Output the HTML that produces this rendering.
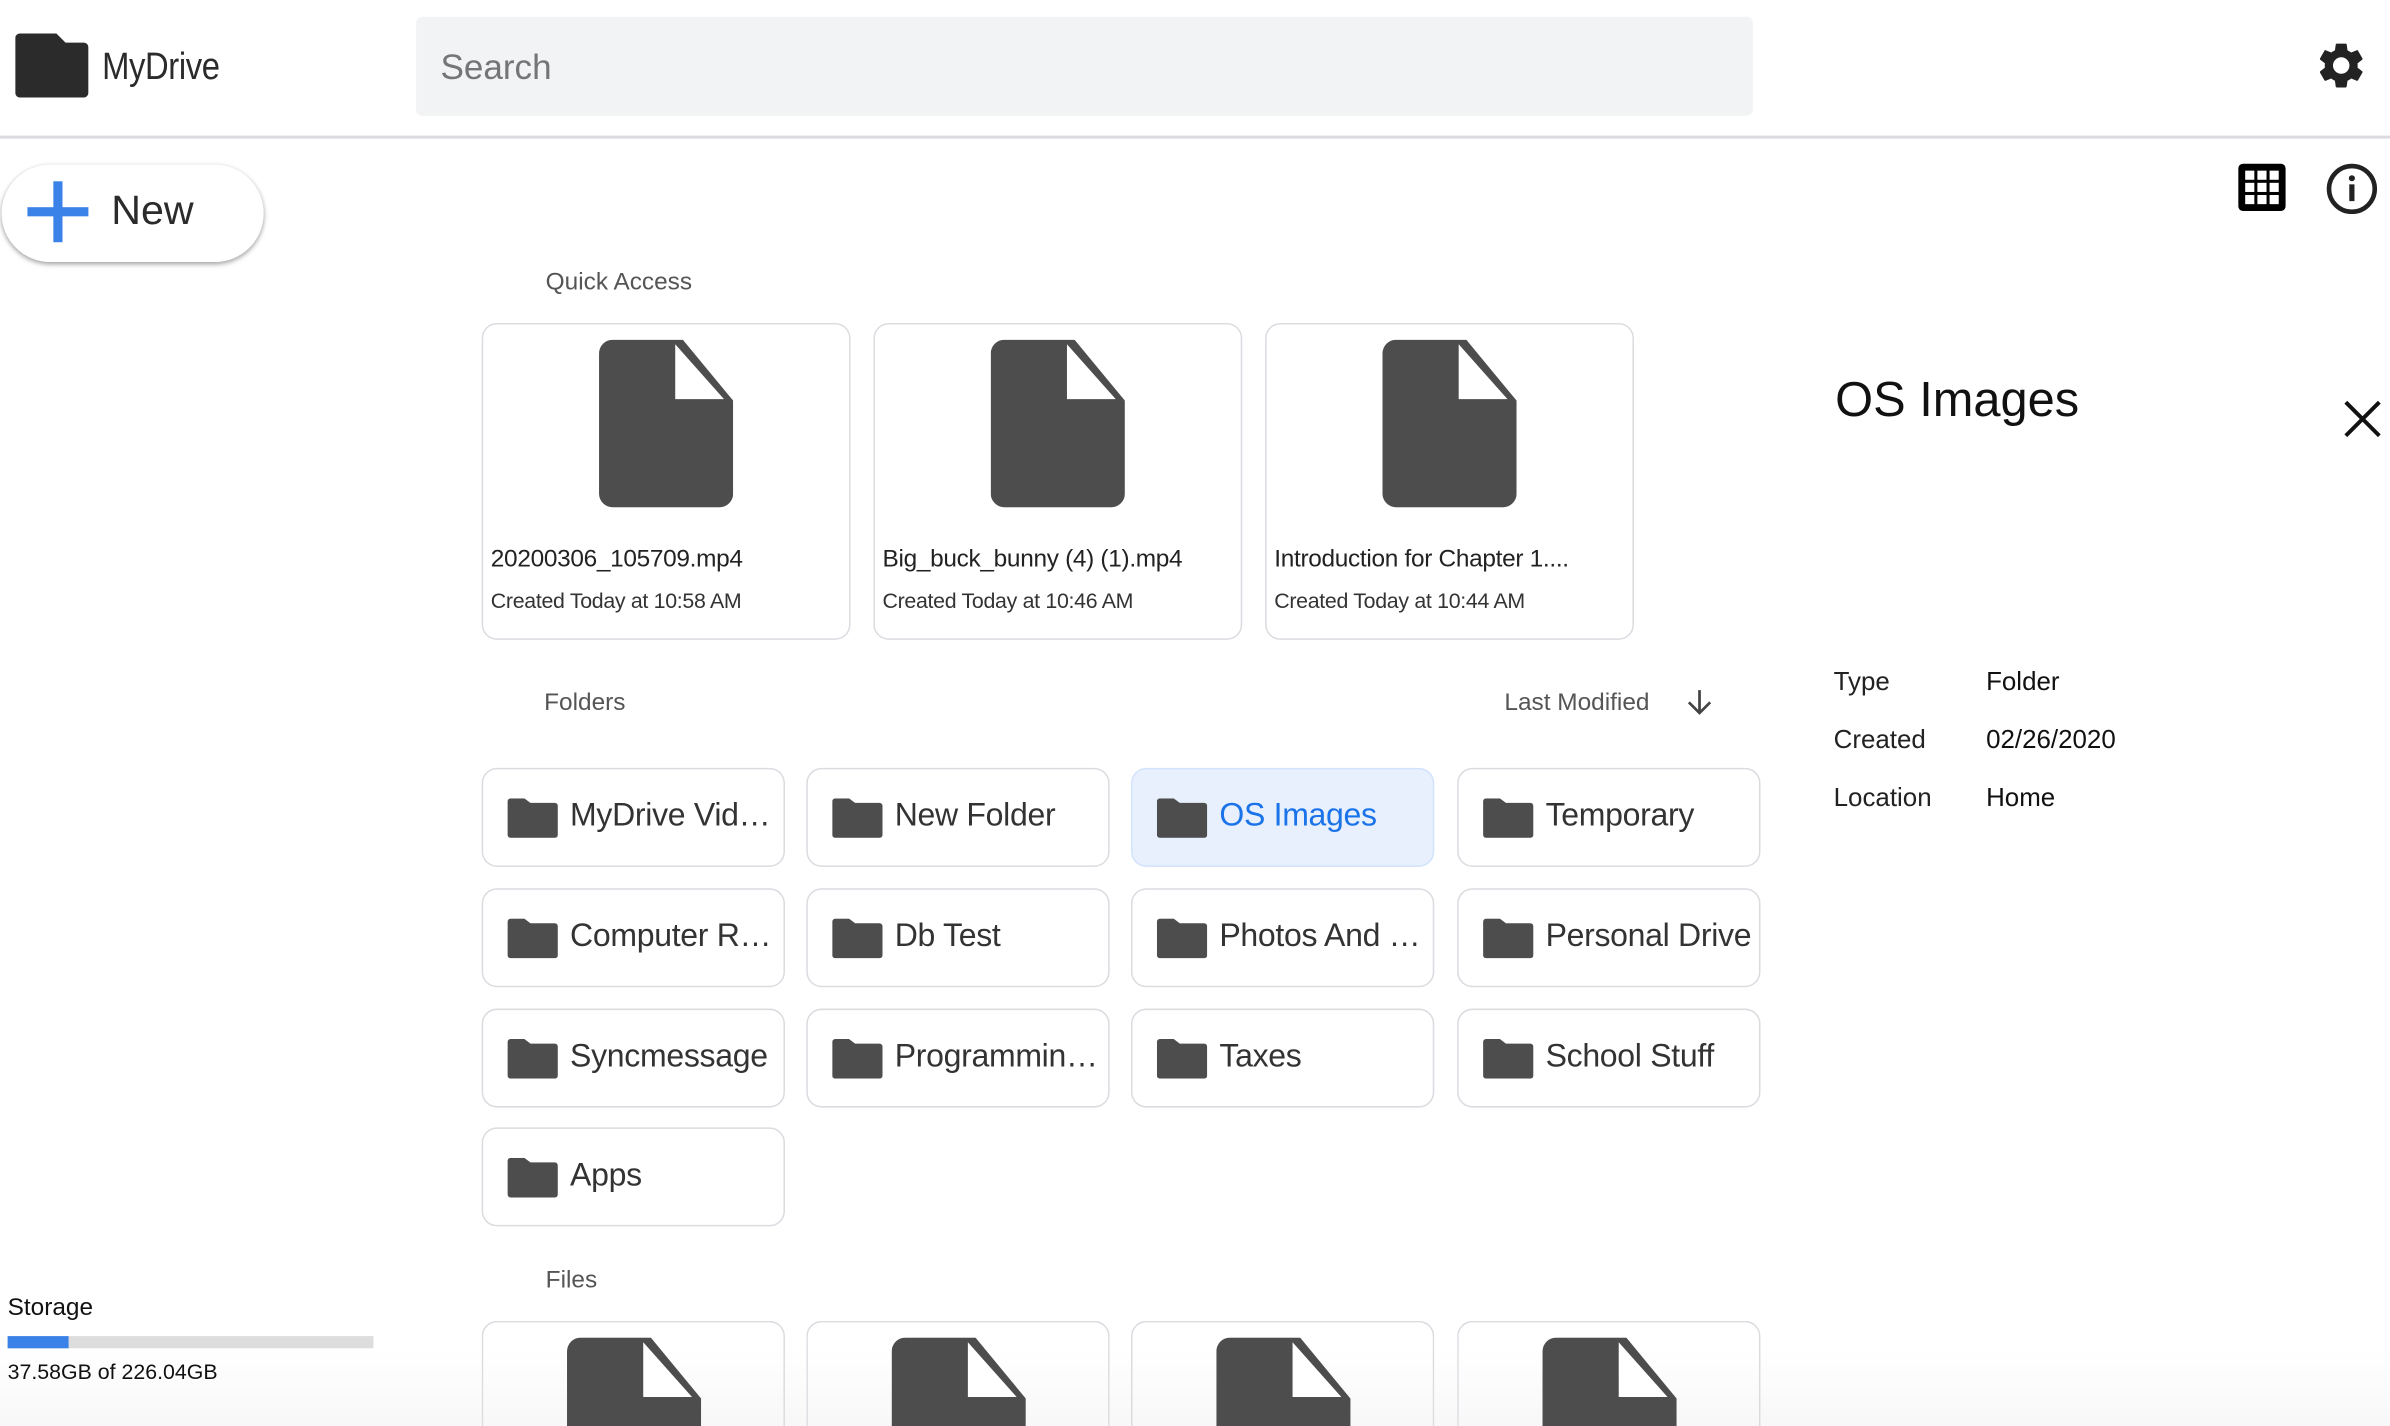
<!DOCTYPE html>
<html><head><meta charset="utf-8">
<style>
html,body{margin:0;padding:0;width:2390px;height:1426px;overflow:hidden;background:#fff}
#s{position:absolute;left:0;top:0;width:1568px;height:936px;overflow:hidden;transform:scale(1.52423,1.52350);transform-origin:0 0;font-family:"Liberation Sans",Arial,sans-serif;color:#222}
.a{position:absolute}
.qc{position:absolute;top:212px;width:242px;height:208px;border:1px solid #dadce0;border-radius:10px;box-sizing:border-box}
.qc svg{position:absolute;left:76px;top:10px}
.qc .n{position:absolute;left:5px;top:146px;font-size:16px;color:#222;white-space:nowrap;letter-spacing:-0.2px}
.qc .d{position:absolute;left:5px;top:173px;font-size:14px;color:#333;white-space:nowrap;letter-spacing:-0.2px}
.fc{position:absolute;width:199px;height:65px;border:1px solid #dadce0;border-radius:10px;box-sizing:border-box;background:#fff}
.fc svg{position:absolute;left:16px;top:19px}
.fc span{position:absolute;left:57px;top:19px;font-size:21px;color:#333;white-space:nowrap;letter-spacing:-0.2px}
.fc.sel{background:#e8f0fe;border-color:#d2e3fc}
.fc.sel span{color:#1a73e8}
.bc{position:absolute;top:867px;width:199px;height:69px;border:1px solid #dadce0;border-bottom:none;border-radius:10px 10px 0 0;box-sizing:border-box;overflow:hidden}
.bc svg{position:absolute;left:55px;top:10px}
.lbl{position:absolute;font-size:16px;color:#555}
</style></head><body><div id="s">
<svg class="a" style="left:10px;top:22px" width="48" height="42" viewBox="0 0 48 42"><path d="M3 0H27L33 6H45A3 3 0 0 1 48 9V39A3 3 0 0 1 45 42H3A3 3 0 0 1 0 39V3A3 3 0 0 1 3 0Z" fill="#2b2b2b"/></svg>
<div class="a" style="left:67px;top:30px;font-size:25px;color:#2b2b2b;transform:scaleX(0.86);transform-origin:0 0;letter-spacing:-0.3px">MyDrive</div>
<div class="a" style="left:273px;top:11px;width:877px;height:65px;background:#f1f3f4;border-radius:4px"></div>
<div class="a" style="left:289px;top:31px;font-size:23px;color:#757575">Search</div>
<svg class="a" style="left:1518px;top:25px" width="36" height="36" viewBox="0 0 24 24"><path fill="#222" d="M19.14 12.94c.04-.3.06-.61.06-.94 0-.32-.02-.64-.07-.94l2.03-1.58a.49.49 0 0 0 .12-.61l-1.920-3.32a.49.49 0 0 0-.59-.22l-2.39.96c-.5-.38-1.03-.7-1.62-.94l-.36-2.54a.48.48 0 0 0-.48-.41h-3.84c-.24 0-.43.17-.47.41l-.36 2.54c-.59.24-1.13.57-1.62.94l-2.390-.96a.48.48 0 0 0-.59.22L2.74 8.87c-.12.21-.08.47.12.61l2.03 1.58c-.05.3-.09.63-.09.94s.02.64.07.94l-2.03 1.58a.49.49 0 0 0-.12.61l1.92 3.32c.12.22.37.29.59.22l2.39-.96c.5.38 1.03.7 1.62.94l.36 2.54c.05.24.24.41.48.41h3.840c.24 0 .44-.17.47-.41l.36-2.54c.59-.24 1.13-.56 1.62-.94l2.39.96c.22.08.47 0 .59-.22l1.92-3.32c.12-.22.07-.47-.12-.61l-2.01-1.58zM12 15.6A3.6 3.6 0 1 1 12 8.4a3.6 3.6 0 0 1 0 7.2z"/></svg>
<div class="a" style="left:0;top:89px;width:1568px;height:2px;background:#dadce0"></div>
<div class="a" style="left:1px;top:108px;width:172px;height:64px;border-radius:32px;background:#fff;box-shadow:0 1px 3px rgba(0,0,0,.3),0 2px 4px rgba(0,0,0,.12)"></div>
<div class="a" style="left:35px;top:119px;width:6px;height:40px;background:#3b82e8"></div>
<div class="a" style="left:18px;top:136px;width:40px;height:6px;background:#3b82e8"></div>
<div class="a" style="left:73px;top:123px;font-size:27px;color:#2b2b2b">New</div>
<svg class="a" style="left:1467px;top:106px" width="34" height="34" viewBox="0 0 34 34"><rect x="1.5" y="1.5" width="31" height="31" rx="3" fill="#000"/><g fill="#fff"><rect x="6" y="6" width="6" height="6"/><rect x="14" y="6" width="6" height="6"/><rect x="22" y="6" width="6" height="6"/><rect x="6" y="14" width="6" height="6"/><rect x="14" y="14" width="6" height="6"/><rect x="22" y="14" width="6" height="6"/><rect x="6" y="22" width="6" height="6"/><rect x="14" y="22" width="6" height="6"/><rect x="22" y="22" width="6" height="6"/></g></svg>
<svg class="a" style="left:1525px;top:106px" width="36" height="36" viewBox="0 0 36 36"><circle cx="18" cy="18" r="15" fill="none" stroke="#222" stroke-width="3"/><rect x="16.3" y="15" width="3.4" height="11" fill="#222"/><circle cx="18" cy="11" r="2" fill="#222"/></svg>
<div class="lbl" style="left:358px;top:177px">Quick Access</div>
<svg width="0" height="0" style="position:absolute"><defs><symbol id="doc" viewBox="0 0 88 110"><path d="M9 0H55L88 40V101A9 9 0 0 1 79 110H9A9 9 0 0 1 0 101V9A9 9 0 0 1 9 0Z" fill="#4d4d4d"/><path d="M50 3V39H82Z" fill="#fff"/></symbol><symbol id="fold" viewBox="0 0 33 26"><path d="M2 0H11L15 3H31A2 2 0 0 1 33 5V24A2 2 0 0 1 31 26H2A2 2 0 0 1 0 24V2A2 2 0 0 1 2 0Z" fill="#4d4d4d"/></symbol></defs></svg>
<div class="qc" style="left:316px"><svg width="88" height="110"><use href="#doc"/></svg><div class="n">20200306_105709.mp4</div><div class="d">Created Today at 10:58 AM</div></div>
<div class="qc" style="left:573px"><svg width="88" height="110"><use href="#doc"/></svg><div class="n">Big_buck_bunny (4) (1).mp4</div><div class="d">Created Today at 10:46 AM</div></div>
<div class="qc" style="left:830px"><svg width="88" height="110"><use href="#doc"/></svg><div class="n">Introduction for Chapter 1....</div><div class="d">Created Today at 10:44 AM</div></div>
<div class="lbl" style="left:357px;top:453px">Folders</div>
<div class="lbl" style="left:987px;top:453px">Last Modified</div>
<svg class="a" style="left:1106px;top:452px" width="18" height="18" viewBox="0 0 18 18"><path d="M9 1V16M2 9L9 16L16 9" fill="none" stroke="#444" stroke-width="1.8"/></svg>
<div class="fc" style="left:316px;top:504px"><svg width="33" height="26"><use href="#fold"/></svg><span>MyDrive Vid…</span></div>
<div class="fc" style="left:529px;top:504px"><svg width="33" height="26"><use href="#fold"/></svg><span>New Folder</span></div>
<div class="fc sel" style="left:742px;top:504px"><svg width="33" height="26"><use href="#fold"/></svg><span>OS Images</span></div>
<div class="fc" style="left:956px;top:504px"><svg width="33" height="26"><use href="#fold"/></svg><span>Temporary</span></div>
<div class="fc" style="left:316px;top:583px"><svg width="33" height="26"><use href="#fold"/></svg><span>Computer R…</span></div>
<div class="fc" style="left:529px;top:583px"><svg width="33" height="26"><use href="#fold"/></svg><span>Db Test</span></div>
<div class="fc" style="left:742px;top:583px"><svg width="33" height="26"><use href="#fold"/></svg><span>Photos And …</span></div>
<div class="fc" style="left:956px;top:583px"><svg width="33" height="26"><use href="#fold"/></svg><span>Personal Drive</span></div>
<div class="fc" style="left:316px;top:662px"><svg width="33" height="26"><use href="#fold"/></svg><span>Syncmessage</span></div>
<div class="fc" style="left:529px;top:662px"><svg width="33" height="26"><use href="#fold"/></svg><span>Programmin…</span></div>
<div class="fc" style="left:742px;top:662px"><svg width="33" height="26"><use href="#fold"/></svg><span>Taxes</span></div>
<div class="fc" style="left:956px;top:662px"><svg width="33" height="26"><use href="#fold"/></svg><span>School Stuff</span></div>
<div class="fc" style="left:316px;top:740px"><svg width="33" height="26"><use href="#fold"/></svg><span>Apps</span></div>
<div class="lbl" style="left:358px;top:832px">Files</div>
<div class="a" style="left:0;top:886px;width:1568px;height:50px;background:linear-gradient(rgba(242,242,242,0),rgba(242,242,242,.6))"></div>
<div class="bc" style="left:316px"><svg width="88" height="110"><use href="#doc"/></svg></div>
<div class="bc" style="left:529px"><svg width="88" height="110"><use href="#doc"/></svg></div>
<div class="bc" style="left:742px"><svg width="88" height="110"><use href="#doc"/></svg></div>
<div class="bc" style="left:956px"><svg width="88" height="110"><use href="#doc"/></svg></div>
<div class="a" style="left:5px;top:850px;font-size:16px;color:#111">Storage</div>
<div class="a" style="left:5px;top:877px;width:240px;height:8px;background:#ddd"></div>
<div class="a" style="left:5px;top:877px;width:40px;height:8px;background:#3b82e8"></div>
<div class="a" style="left:5px;top:892px;font-size:14px;color:#111">37.58GB of 226.04GB</div>
<div class="a" style="left:1204px;top:244px;font-size:32px;color:#111">OS Images</div>
<svg class="a" style="left:1537px;top:262px" width="26" height="26" viewBox="0 0 26 26"><path d="M2 2L24 24M24 2L2 24" stroke="#111" stroke-width="2.6"/></svg>
<div class="a" style="left:1203px;top:438px;font-size:17px;color:#222">Type</div>
<div class="a" style="left:1303px;top:438px;font-size:17px;color:#111">Folder</div>
<div class="a" style="left:1203px;top:476px;font-size:17px;color:#222">Created</div>
<div class="a" style="left:1303px;top:476px;font-size:17px;color:#111">02/26/2020</div>
<div class="a" style="left:1203px;top:514px;font-size:17px;color:#222">Location</div>
<div class="a" style="left:1303px;top:514px;font-size:17px;color:#111">Home</div>
</div></body></html>
